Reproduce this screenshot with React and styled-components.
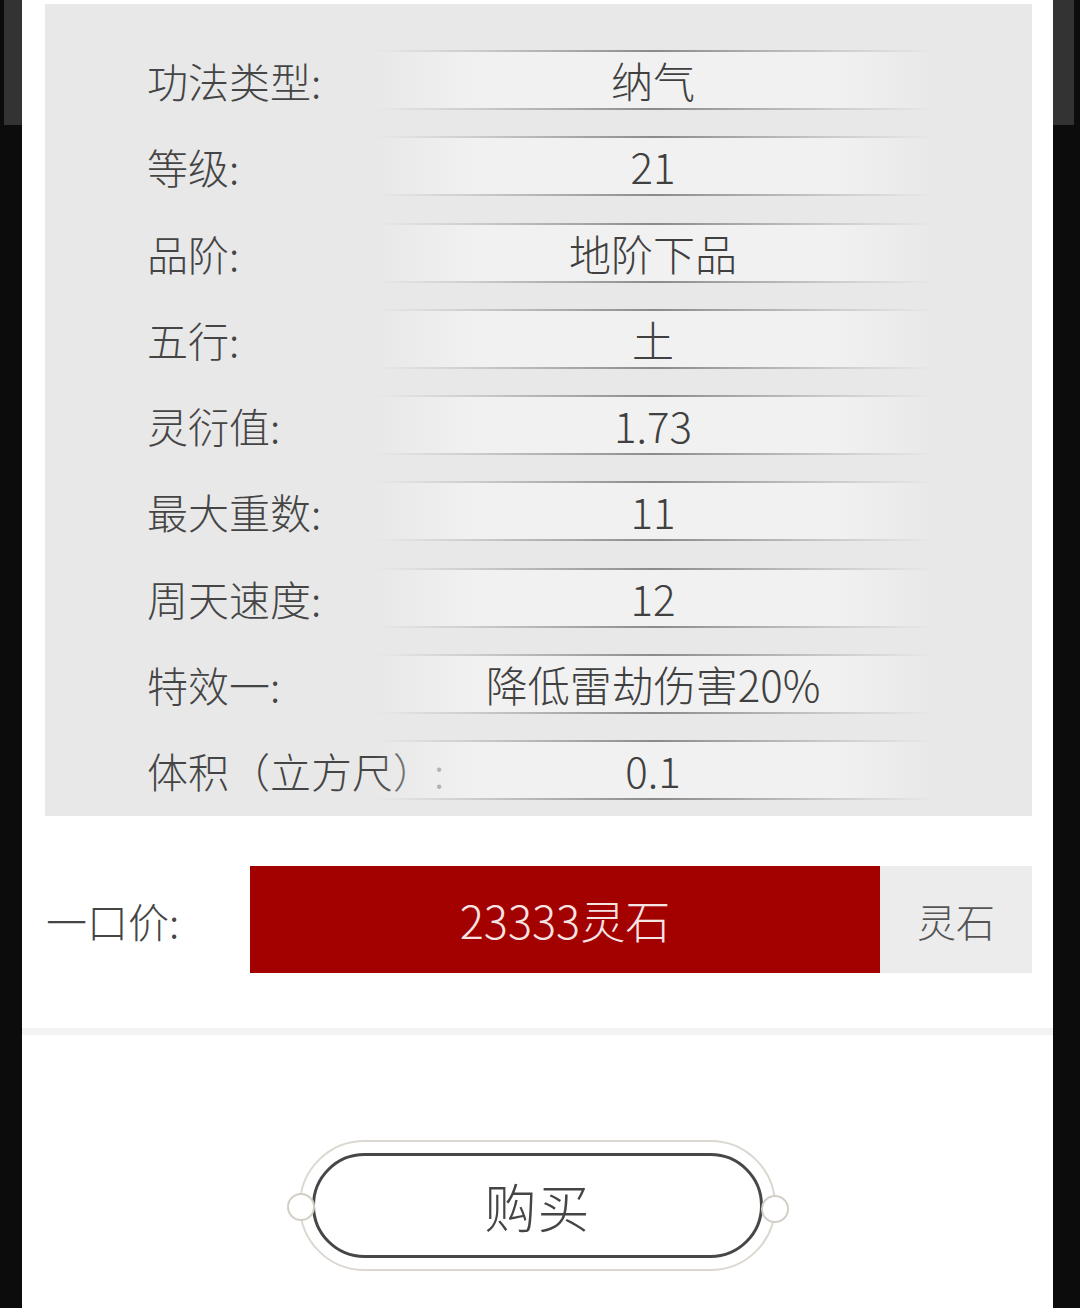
import React from 'react';
import styled, { createGlobalStyle } from 'styled-components';

const GlobalStyle = createGlobalStyle`
  html, body {
    margin: 0;
    padding: 0;
    background: #0c0c0c;
  }
  body {
    font-family: "Noto Sans CJK SC", "Noto Sans", sans-serif;
    color: #444;
  }
`;

const Page = styled.div`
  width: 1080px;
  height: 1308px;
  overflow: hidden;
  box-sizing: border-box;
  padding-left: 22px;
  background:
    linear-gradient(#333, #333) no-repeat 4px 0 / 1070px 125px,
    #0c0c0c;
`;

const Modal = styled.div`
  width: 1031px;
  height: 1308px;
  background: #fff;
  display: flex;
  flex-direction: column;
`;

const InfoPanel = styled.div`
  margin: 4px 21px 0 23px;
  padding: 46px 0 16px;
  background: #e8e8e8;
  display: flex;
  flex-direction: column;
  gap: 26.3px;
`;

const Row = styled.div`
  display: grid;
  grid-template-columns: 102px 228px 560px;
  height: 60px;
  align-items: center;
`;

const Label = styled.div`
  grid-column: 2;
  font-size: 41px;
  font-weight: 300;
  white-space: nowrap;
  color: #454545;
`;

const Value = styled.div`
  grid-column: 3;
  height: 60px;
  line-height: 60px;
  text-align: center;
  font-size: 42px;
  font-weight: 300;
  color: #404040;
  padding-right: 4px;
  box-sizing: border-box;
  background:
    linear-gradient(to right, rgba(140, 140, 140, 0), #8a8a8a 50%, rgba(140, 140, 140, 0)) top / 100% 2px no-repeat,
    linear-gradient(to right, rgba(140, 140, 140, 0), #8a8a8a 50%, rgba(140, 140, 140, 0)) bottom / 100% 2px no-repeat,
    linear-gradient(to right, rgba(242, 242, 242, 0), #f1f1f1 18%, #f1f1f1 82%, rgba(242, 242, 242, 0));
`;

const PriceRow = styled.div`
  margin: 50px 21px 0 24px;
  height: 107px;
  display: flex;
  align-items: stretch;
`;

const PriceLabel = styled.div`
  width: 204px;
  display: flex;
  align-items: center;
  font-size: 41px;
  font-weight: 300;
  color: #454545;
`;

const PriceBox = styled.div`
  width: 630px;
  display: flex;
  align-items: center;
  justify-content: center;
  background: #a30000;
  color: #f6e4e4;
  font-size: 45px;
  font-weight: 300;
`;

const Unit = styled.div`
  flex: 1;
  display: flex;
  align-items: center;
  justify-content: center;
  background: #ececec;
  color: #555;
  font-size: 39px;
  font-weight: 300;
`;

const Divider = styled.div`
  margin-top: 55px;
  height: 7px;
  background: #f3f3f3;
`;

const ButtonArea = styled.div`
  display: flex;
  justify-content: center;
  padding-top: 105px;
`;

const OuterRing = styled.div`
  position: relative;
  width: 477px;
  height: 131px;
  box-sizing: border-box;
  border: 2px solid #dcd8d1;
  border-radius: 66px;
  display: flex;
  align-items: center;
  justify-content: center;
`;

const Knob = styled.span`
  position: absolute;
  top: 50%;
  ${({ side }) => (side === 'left' ? 'left: -14px;' : 'right: -15px;')}
  margin-top: ${({ side }) => (side === 'left' ? '-13px' : '-11px')};
  width: 24px;
  height: 24px;
  border-radius: 50%;
  background: #fff;
  border: 2px solid #d3cfc7;
`;

const BuyButton = styled.button`
  width: 451px;
  height: 105px;
  box-sizing: border-box;
  border: 3px solid #474747;
  border-radius: 53px;
  background: #fff;
  font-family: inherit;
  font-size: 52px;
  font-weight: 300;
  color: #454545;
  padding: 0;
  letter-spacing: 1px;
  cursor: pointer;
`;

const items = [
  ['功法类型:', '纳气'],
  ['等级:', '21'],
  ['品阶:', '地阶下品'],
  ['五行:', '土'],
  ['灵衍值:', '1.73'],
  ['最大重数:', '11'],
  ['周天速度:', '12'],
  ['特效一:', '降低雷劫伤害20%'],
  ['体积（立方尺）:', '0.1'],
];

export default function App() {
  return (
    <Page>
      <GlobalStyle />
      <Modal>
        <InfoPanel>
          {items.map(([label, value]) => (
            <Row key={label}>
              <Label>{label}</Label>
              <Value>{value}</Value>
            </Row>
          ))}
        </InfoPanel>
        <PriceRow>
          <PriceLabel>一口价:</PriceLabel>
          <PriceBox>23333灵石</PriceBox>
          <Unit>灵石</Unit>
        </PriceRow>
        <Divider />
        <ButtonArea>
          <OuterRing>
            <Knob side="left" />
            <BuyButton>购买</BuyButton>
            <Knob side="right" />
          </OuterRing>
        </ButtonArea>
      </Modal>
    </Page>
  );
}
